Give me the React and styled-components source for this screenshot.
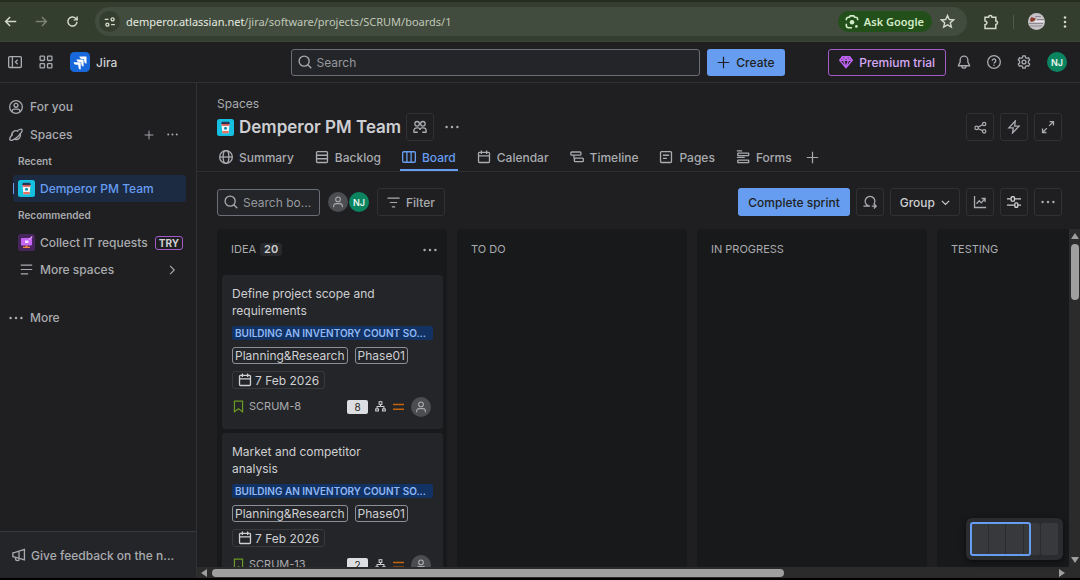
import React from 'react';
import styled, { createGlobalStyle, css } from 'styled-components';

const c = {
  surface: '#1f1f21',
  sunken: '#18191a',
  raised: '#242528',
  border: '#2e2f32',
  text: '#cecfd2',
  subtle: '#a9abaf',
  subtlest: '#96999e',
  blue: '#669df1',
  green: '#0b8560',
  purple: '#bf63f3',
};

const Global = createGlobalStyle`
  *, *::before, *::after { box-sizing: border-box; }
  body { margin: 0; background: #000; }
  button, input { font: inherit; color: inherit; }
  button { cursor: pointer; }
  ul { list-style: none; margin: 0; padding: 0; }
  a { color: inherit; text-decoration: none; }
`;

/* ---------- icons ---------- */

const Svg = styled.svg`
  width: ${(p) => p.$size || 14}px;
  height: ${(p) => p.$size || 14}px;
  flex: none;
  display: block;
  fill: none;
  stroke: currentColor;
  stroke-width: ${(p) => p.$weight || 1.5};
`;

const shapes = {
  back: <path d="M15 8H2M7.5 2.5 2 8l5.500 5.500" />,
  forward: <path d="M1 8h13M8.500 2.500 14 8l-5.500 5.500" />,
  reload: <><path d="M13.500 8.500A5.600 5.600 0 1 1 12 4.200l1.500 1.500" /><path d="M13.700 1.800v4.200H9.500" /></>,
  tune: <><path d="M1 4.500h5M9.500 11.500h5" /><circle cx="11.500" cy="4.500" r="2" /><circle cx="4.500" cy="11.500" r="2" /></>,
  lens: <><path d="M1.500 6V5A2.500 2.500 0 0 1 4 2.500h1L6 1h4l1 1.500h1A2.500 2.500 0 0 1 14.500 5v1M1.500 10v2A2.500 2.500 0 0 0 4 14.500h4" /><circle cx="8" cy="8.300" r="2.600" fill="currentColor" stroke="none" /><circle cx="13" cy="13" r="1.500" fill="currentColor" stroke="none" /></>,
  star: <path d="m8 1.600 1.900 4.300 4.700.4-3.600 3.100 1.100 4.600L8 11.600 3.900 14 5 9.400 1.400 6.300l4.700-.4z" />,
  puzzle: <path d="M2 3.200h3.600a1.700 1.700 0 0 1 3.400 0h3.800v3.900a1.700 1.700 0 0 1 0 3.400v3.900H2v-3.700c2.600-.3 2.600-3.500 0-3.800z" />,
  collapse: <><rect x=".75" y="1.750" width="14.500" height="12.500" rx="1.250" /><path d="M5 2v12M11 5.500 8.500 8l2.500 2.500" /></>,
  apps: <><rect x="1.250" y="1.250" width="5" height="5" rx=".8" /><rect x="9.750" y="1.250" width="5" height="5" rx=".8" /><rect x="1.250" y="9.750" width="5" height="5" rx=".8" /><rect x="9.750" y="9.750" width="5" height="5" rx=".8" /></>,
  search: <><circle cx="7" cy="7" r="5.750" /><path d="m11.200 11.200 4 4" /></>,
  plus: <path d="M8 1v14M1 8h14" />,
  gem: <path d="M3.800 2h8.400l3 4L8 14.500.8 6zM1 6h14M5.200 6 8 14l2.800-8M5.200 6 8 2l2.800 4M3.800 2l1.400 4M12.200 2l-1.400 4" />,
  bell: <><path d="M8 1.250A4.400 4.400 0 0 0 3.600 5.600v2.600L1.700 11.500v.75h12.600v-.75l-1.900-3.300V5.600A4.400 4.400 0 0 0 8 1.250z" /><path d="M5.500 12.500a2.500 2.500 0 0 0 5 0" /></>,
  help: <><circle cx="8" cy="8" r="7.250" /><path d="M6 6.600a2 2 0 1 1 3.200 1.600C8.400 8.700 8 9 8 9.800" /><circle cx="8" cy="11.700" r=".9" fill="currentColor" stroke="none" /></>,
  gear: <><path d="m6.700 1-.5 1.900-1.500.9-1.900-.6-1.300 2.300 1.400 1.400v2.200L1.500 10.500l1.300 2.300 1.900-.6 1.500.9.500 1.900h2.600l.5-1.900 1.500-.9 1.900.6 1.300-2.300-1.400-1.400V6.900l1.400-1.400-1.300-2.300-1.900.6-1.500-.9L9.300 1z" /><circle cx="8" cy="8" r="2.200" /></>,
  person: <><circle cx="8" cy="8" r="7.250" /><circle cx="8" cy="6" r="2.250" /><path d="M3.700 13.500v-.7A2.300 2.300 0 0 1 6 10.500h4a2.300 2.300 0 0 1 2.300 2.300v.7" /></>,
  planet: <><path d="M12.600 6.100A4.900 4.900 0 0 1 6.100 12.600M3.300 9.500A4.900 4.900 0 0 1 10.600 3.900" /><path d="M4 7.200C1.600 9.900.3 12.500 1.100 13.600c1.200 1.600 5.200-.4 8.800-3.700s6-7.100 4.800-8.300c-.7-.8-2.600-.1-4.700 1.300" /></>,
  dots: <g fill="currentColor" stroke="none"><circle cx="1.800" cy="8" r="1.400" /><circle cx="8" cy="8" r="1.400" /><circle cx="14.200" cy="8" r="1.400" /></g>,
  kebab: <g fill="currentColor" stroke="none"><circle cx="8" cy="2" r="1.700" /><circle cx="8" cy="8" r="1.700" /><circle cx="8" cy="14" r="1.700" /></g>,
  lines: <path d="M1 2.500h14M1 8h14M1 13.500h9" />,
  chevronRight: <path d="m5.500 2.500 5.500 5.500-5.500 5.500" />,
  chevronDown: <path d="m1.500 5 6.500 6.500L14.500 5" />,
  megaphone: <><path d="M1 5.500 3.500 5 14.200 1.500v12L3.500 10.500 1 10z" /><path d="M8 4v8M4 11v1.500a2.200 2.200 0 0 0 4.300.4" /></>,
  people: <><circle cx="4.700" cy="4.300" r="2.600" /><circle cx="11.300" cy="4.300" r="2.600" /><path d="M1 14.500v-2.200a3.200 3.200 0 0 1 3.200-3.200h1.300c1.500 0 2.500.9 2.500 2.400 0-1.500 1-2.400 2.500-2.400h1.300a3.200 3.200 0 0 1 3.200 3.200v2.200M1 14h4.500M10.500 14H15" /></>,
  globe: <><circle cx="8" cy="8" r="7.250" /><ellipse cx="8" cy="8" rx="3.300" ry="7.250" /><path d="M1 8h14" /></>,
  backlog: <><rect x="1.750" y="1.750" width="12.500" height="12.500" rx="1" /><path d="M2 6h12M2 10h12" /></>,
  board: <><rect x=".75" y="2" width="14.500" height="12" rx="1.250" /><path d="M5.600 2v12M10.400 2v12" /></>,
  calendar: <><rect x="1.750" y="2.750" width="12.500" height="11.500" rx="1" /><path d="M2 6.750h12M5 .5v4M11 .5v4" /></>,
  timeline: <><rect x="1" y="2.250" width="11.500" height="3.500" rx="1" /><path d="M4.500 6v2.500a1.500 1.500 0 0 0 1.500 1.500" /><rect x="5" y="9.250" width="10.250" height="4" rx="1" /></>,
  pages: <><rect x="1.750" y="1.750" width="12.500" height="12.500" rx="1" /><path d="M4.500 6h7M4.500 9.500h4.500" /></>,
  forms: <><path d="M1 1h6M1 8.500h9" /><rect x="2" y="3.500" width="12.500" height="3" rx=".5" /><rect x="2" y="11.500" width="12.500" height="3" rx=".5" /></>,
  share: <><circle cx="3.200" cy="8.500" r="2.100" /><circle cx="12.500" cy="3.700" r="2.100" /><circle cx="12.500" cy="12.700" r="2.100" /><path d="m5.200 7.500 5.300-2.800M5.200 9.500l5.300 2.300" /></>,
  bolt: <path d="M9.500 1.200 2.200 9h5l-.9 5.800L13.800 7H8.700z" />,
  expand: <path d="M9.800 1.750h4.450V6.200M14 2 9.300 6.700M1.750 9.800v4.450H6.200M2 14l4.700-4.700" />,
  sprint: <><path d="M.5 12.700H8A5.600 5.600 0 1 1 12.400 10.600" /><path d="M10 12.700h5M12.400 10l2.700 2.700-2.700 2.700" /></>,
  chart: <path d="M1.750 1v13.250H15M4 10l3.200-3.500L9.500 9l4-4.500M9.800 4h4v4" />,
  sliders: <><path d="M0 4.500h4.500M9 4.500h7M0 11.500h8.500M12.500 11.500H16" /><rect x="4.750" y="2" width="3.800" height="5" rx="1" /><rect x="9" y="9" width="3.300" height="5" rx="1" /></>,
  filter: <path d="M.5 2.500h15M3.500 8h9M6 13.500h4" />,
  bookmark: <path d="M3 1.250h10v13.250L8 10.700l-5 3.800z" />,
  tree: <g><rect x="6" y="1" width="4" height="4" /><path d="M8 5v3M3 11.500V8h10v3.500" /><rect x="1" y="11.500" width="4" height="3" /><rect x="11" y="11.500" width="4" height="3" /></g>,
  equal: <path d="M0 5h16M0 12h16" />,
  user: <><circle cx="8" cy="4.500" r="3.100" /><path d="M2.200 15v-1.700a3.200 3.200 0 0 1 3.200-3.200h5.200a3.200 3.200 0 0 1 3.200 3.200V15" /></>,
};

const Icon = ({ name, size, weight }) => (
  <Svg viewBox="0 0 16 16" $size={size} $weight={weight} aria-hidden="true">{shapes[name]}</Svg>
);

const Art = styled.svg`
  width: ${(p) => p.$size}px;
  height: ${(p) => p.$size}px;
  flex: none;
  display: block;
`;

const JiraLogo = () => (
  <Art $size={20} viewBox="0 0 20 20" aria-hidden="true">
    <rect width="20" height="20" rx="4.500" fill="#1868db" />
    <g fill="#fff">
      <path d="M9.300 4.500h7.200v7.200a3 3 0 0 1-2.400-3V7H12.300a3 3 0 0 1-3-2.500z" />
      <path d="M6.400 7.400h7.200v7.200a3 3 0 0 1-2.400-3V9.900H9.400a3 3 0 0 1-3-2.500z" />
      <path d="M3.500 10.300h7.200v7.200a3 3 0 0 1-2.400-3v-1.700H6.500a3 3 0 0 1-3-2.500z" />
    </g>
  </Art>
);

const CupLogo = () => (
  <Art $size={17} viewBox="0 0 17 17" aria-hidden="true">
    <rect width="17" height="17" rx="2.500" fill="#15bfdf" />
    <path d="M5 2.800h7l1 2.200H4z" fill="#253858" />
    <path d="M4.500 5h8l-.9 9.200H5.400z" fill="#f4f5f7" />
    <path d="M4.500 5h8l-.15 1.700h-7.700z" fill="#d9534f" />
    <path d="M5.200 12h6.600l-.2 2.200H5.400z" fill="#e5725f" />
    <circle cx="8.500" cy="9.300" r="1.500" fill="#158cb0" />
  </Art>
);

const ServiceLogo = () => (
  <Art $size={17} viewBox="0 0 17 17" aria-hidden="true">
    <rect width="17" height="17" rx="2.500" fill="#48245d" />
    <rect x="3" y="4" width="11" height="7.500" rx="1" fill="#c566f5" />
    <path d="M7 6.500h3.500V9H7z" fill="#f3dcff" />
    <path d="M11 5.500 14.300 2.500" stroke="#dfa5fb" strokeWidth="1.200" />
    <path d="M7.500 11.500h2v1.300h2.500v1.200H5v-1.200h2.500z" fill="#f0883e" />
  </Art>
);

const ProfilePhoto = () => (
  <Art $size={17} viewBox="0 0 17 17" aria-hidden="true">
    <circle cx="8.500" cy="8.500" r="8.500" fill="#c8c3c6" />
    <path d="M2 6.500 3.500 4 6 5l2 .5-2 2.500L3 9z" fill="#8c3a2a" />
    <path d="M7 3.500h6M9 6.500h7M1 10.500h14M2 13h12" stroke="#8d8a94" strokeWidth="1" />
    <path d="M7 8.500h9" stroke="#eeeaf0" strokeWidth="1.200" />
  </Art>
);

/* ---------- shared parts ---------- */

const Shell = styled.div`
  height: 100vh;
  display: flex;
  flex-direction: column;
  padding-bottom: 2px;
  font-family: Inter, 'Liberation Sans', sans-serif;
  font-size: 12px;
  line-height: 17px;
  color: ${c.subtle};
  background: #000;
`;

const PlainButton = styled.button`
  display: flex;
  align-items: center;
  justify-content: center;
  padding: 0;
  border: 0;
  background: none;
  color: ${(p) => p.$color || 'inherit'};
`;

const BoxButton = styled.button`
  display: flex;
  align-items: center;
  justify-content: center;
  gap: 6px;
  height: 28px;
  min-width: 28px;
  padding: 0 ${(p) => (p.$label ? 9 : 0)}px;
  border: 1px solid #303134;
  border-radius: 3px;
  background: none;
  color: ${(p) => (p.$bright ? c.text : c.subtle)};
  font-weight: 500;
  white-space: nowrap;
`;

const PrimaryButton = styled.button`
  display: flex;
  align-items: center;
  justify-content: center;
  gap: 6px;
  height: ${(p) => p.$height || 28}px;
  padding: 0 10px;
  border: 0;
  border-radius: 3px;
  background: ${c.blue};
  color: #1f1f21;
  font-weight: 500;
  white-space: nowrap;
`;

const Avatar = styled.span`
  display: flex;
  align-items: center;
  justify-content: center;
  flex: none;
  width: 20px;
  height: 20px;
  border-radius: 50%;
  background: ${(p) => (p.$empty ? '#4b4d51' : c.green)};
  color: ${(p) => (p.$empty ? '#a9abaf' : '#e8f5ef')};
  font-size: 9px;
  font-weight: 600;
`;

const Group = styled.div`
  display: flex;
  align-items: center;
  gap: ${(p) => p.$gap}px;
`;

/* ---------- browser bar ---------- */

const BrowserBar = styled.div`
  flex: none;
  display: flex;
  align-items: center;
  gap: 16px;
  height: 42px;
  padding: 0 9px 0 4px;
  border-top: 2px solid #252d20;
  border-bottom: 1px solid #3d453a;
  background: #343e2e;
  color: #d3dacb;
  font-family: 'Noto Sans', 'Open Sans', sans-serif;
  font-size: 11px;
`;

const Omnibox = styled.div`
  flex: 1;
  min-width: 0;
  display: flex;
  align-items: center;
  gap: 6px;
  height: 29px;
  padding: 0 12px 0 4px;
  border-radius: 15px;
  background: #424c3e;
`;

const SiteInfo = styled(PlainButton)`
  width: 21px;
  height: 21px;
  border-radius: 50%;
  background: #343e2e;
`;

const Address = styled.span`
  flex: 1;
  min-width: 0;
  overflow: hidden;
  text-overflow: ellipsis;
  white-space: nowrap;
  color: #c0c7b9;
  b { font-weight: 400; color: #e6ebe0; }
`;

const AskButton = styled(PlainButton)`
  gap: 5px;
  height: 21px;
  padding: 0 8px 0 7px;
  margin-right: 2px;
  border-radius: 11px;
  background: #234f1b;
  color: #d3ecc8;
  font-weight: 600;
`;

const BarDivider = styled.span`
  width: 1px;
  height: 14px;
  background: #505a4b;
`;

/* ---------- app header ---------- */

const Header = styled.header`
  flex: none;
  display: grid;
  grid-template-columns: 1fr minmax(0, 494px) 1fr;
  align-items: center;
  height: 41px;
  padding: 0 13px 0 8px;
  border-bottom: 1px solid #303134;
  background: ${c.surface};
`;

const Brand = styled.a`
  display: flex;
  align-items: center;
  gap: 6px;
  color: ${c.text};
  font-weight: 500;
`;

const SearchBar = styled.div`
  display: flex;
  gap: 7px;
`;

const Field = styled.label`
  display: flex;
  align-items: center;
  gap: 5px;
  flex: ${(p) => (p.$grow ? '1' : 'none')};
  width: ${(p) => (p.$grow ? 'auto' : '103px')};
  min-width: 0;
  height: 27px;
  padding: 0 0 0 6px;
  border: 1px solid #6b6e76;
  border-radius: 3px;
  background: #242528;
`;

const Input = styled.input`
  flex: 1;
  min-width: 0;
  width: 100%;
  padding: 0;
  border: 0;
  outline: 0;
  background: none;
  &::placeholder { color: ${c.subtlest}; opacity: 1; }
`;

const HeaderActions = styled(Group)`
  justify-content: flex-end;
`;

const PremiumButton = styled(PlainButton)`
  gap: 6px;
  height: 27px;
  padding: 0 10px;
  margin-right: -5px;
  border: 1px solid #a35bca;
  border-radius: 3px;
  color: #d7a8f5;
  font-weight: 500;
  white-space: nowrap;
  svg { color: ${c.purple}; }
`;

/* ---------- sidebar ---------- */

const Body = styled.div`
  flex: 1;
  min-height: 0;
  display: flex;
`;

const Sidebar = styled.nav`
  flex: none;
  width: 197px;
  display: flex;
  flex-direction: column;
  border-right: 1px solid #303134;
  background: ${c.surface};
`;

const SideList = styled.ul`
  flex: 1;
  padding: 10px 10px 0 9px;
`;

const SideItem = styled.li`
  display: flex;
  align-items: center;
  gap: 7px;
  height: 27px;
  margin-top: ${(p) => p.$space || 0}px;
  margin-left: ${(p) => (p.$nested ? 4 : 0)}px;
  padding-left: ${(p) => (p.$nested ? 5 : 0)}px;
  font-weight: 500;
  white-space: nowrap;
  ${(p) => p.$selected && css`
    border-radius: 3px;
    color: ${c.blue};
    background: linear-gradient(${c.blue}, ${c.blue}) 0 50% / 1px 11px no-repeat #1c2b42;
  `}
`;

const SideLink = styled.a`
  flex: 1;
  min-width: 0;
  display: flex;
  align-items: center;
  gap: ${(p) => (p.$nested ? 5 : 7)}px;
`;

const IconSlot = styled.span`
  flex: none;
  width: 17px;
  display: flex;
  justify-content: center;
`;

const SideHeading = styled.li`
  display: flex;
  align-items: center;
  height: 27px;
  padding-left: 9px;
  font-size: 10px;
  font-weight: 600;
`;

const TryBadge = styled.span`
  margin-right: 3px;
  padding: 0 3px;
  border: 1px solid #a35bca;
  border-radius: 3px;
  color: ${c.text};
  font-size: 10px;
  font-weight: 700;
  line-height: 12px;
`;

const SideActions = styled(Group)`
  padding-right: 8px;
`;

const Feedback = styled.a`
  flex: none;
  display: flex;
  align-items: center;
  gap: 5px;
  height: 47px;
  padding: 0 12px;
  border-top: 1px solid #38393c;
  background: #242528;
  font-weight: 500;
  white-space: nowrap;
`;

/* ---------- main ---------- */

const Main = styled.main`
  flex: 1;
  min-width: 0;
  display: flex;
  flex-direction: column;
  background: ${c.surface};
`;

const SpaceHeader = styled.header`
  padding: 12px 18px 0 20px;
  border-bottom: 1px solid ${c.border};
`;

const Crumb = styled.a`
  display: block;
  padding-bottom: 1px;
`;

const TitleRow = styled.div`
  display: flex;
  align-items: center;
  gap: 5px;
  height: 28px;
`;

const Title = styled.h1`
  margin: 0;
  color: ${c.text};
  font-size: 17px;
  line-height: 22px;
  font-weight: 600;
  white-space: nowrap;
`;

const Spacer = styled.span`
  flex: 1;
`;

const TabBar = styled.div`
  display: flex;
  gap: 12px;
  height: 30px;
  padding-top: 2px;
`;

const Tabs = styled.nav`
  display: flex;
  gap: 17px;
`;

const Tab = styled.a`
  display: flex;
  align-items: center;
  gap: 6px;
  padding: 2px 2px 0;
  border-bottom: 2px solid ${(p) => (p.$active ? c.blue : 'transparent')};
  color: ${(p) => (p.$active ? c.blue : c.subtle)};
  font-weight: 500;
  white-space: nowrap;
`;

const Toolbar = styled.div`
  display: flex;
  align-items: center;
  gap: 8px;
  padding: 16px 18px 13px 20px;
`;

/* ---------- board ---------- */

const BoardArea = styled.div`
  position: relative;
  flex: 1;
  min-height: 0;
  display: grid;
  grid-template-columns: minmax(0, 1fr) 11px;
  grid-template-rows: minmax(0, 1fr) 11px;
`;

const Columns = styled.div`
  display: flex;
  gap: 10px;
  padding-left: 20px;
  overflow: hidden;
`;

const Column = styled.section`
  flex: none;
  width: 230px;
  padding: 0 4px 0 5px;
  border-radius: 5px 5px 0 0;
  background: ${c.sunken};
`;

const ColumnHead = styled.header`
  display: flex;
  align-items: center;
  gap: 4px;
  height: 46px;
  padding: 0 6px 5px 9px;
`;

const ColumnName = styled.h2`
  margin: 0;
  font-size: 11px;
  font-weight: 400;
`;

const Count = styled.span`
  padding: 0 4px;
  border-radius: 3px;
  background: #28292c;
  color: ${c.text};
  font-size: 11px;
  font-weight: 600;
  line-height: 13px;
`;

const Card = styled.article`
  display: flex;
  flex-direction: column;
  align-items: flex-start;
  gap: 7px;
  margin-bottom: 4px;
  padding: 10px 10px 12px;
  border-radius: 3px;
  background: ${c.raised};
  color: ${c.text};
`;

const CardTitle = styled.h3`
  margin: 0;
  padding-right: 36px;
  font-size: 12px;
  font-weight: 400;
`;

const Epic = styled.span`
  width: 100%;
  padding: 0 3px;
  border-radius: 2px;
  background: #123263;
  color: #8fb8f6;
  font-size: 10px;
  font-weight: 600;
  line-height: 14px;
  white-space: nowrap;
`;

const Label = styled.span`
  padding: 0 2px;
  border: 1px solid #8c8f97;
  border-radius: 3px;
  line-height: 15px;
`;

const DueDate = styled.time`
  display: flex;
  align-items: center;
  gap: 3px;
  height: 18px;
  padding: 0 5px;
  border: 1px solid #38393c;
  border-radius: 3px;
`;

const CardFoot = styled.footer`
  align-self: stretch;
  display: flex;
  align-items: center;
  gap: 7px;
  height: 21px;
  padding-right: 2px;
`;

const IssueKey = styled.a`
  display: flex;
  align-items: center;
  gap: 4px;
  flex: 1;
  color: ${c.subtle};
  font-size: 11px;
  svg { color: #6a9a23; }
`;

const Estimate = styled.span`
  width: 21px;
  border-radius: 2px;
  background: #dddee1;
  color: #1f1f21;
  font-size: 10px;
  line-height: 14px;
  text-align: center;
`;

const Priority = styled.span`
  color: #c2650c;
`;

/* ---------- scroll bars and minimap ---------- */

const Track = styled.div`
  display: flex;
  align-items: center;
  justify-content: space-between;
  flex-direction: ${(p) => (p.$vertical ? 'column' : 'row')};
  gap: 4px;
  padding: ${(p) => (p.$vertical ? '3px 0' : '0 3px')};
  background: #2b2b2c;
  color: #9f9f9f;
`;

const Thumb = styled.span`
  border-radius: 4px;
  background: #9f9f9f;
  ${(p) => (p.$vertical ? 'width: 8px; height: 17%;' : 'height: 8px; width: 66%;')}
`;

const Corner = styled.div`
  background: #2b2b2c;
`;

const arrows = {
  up: 'M4 1 8 7H0z',
  down: 'M4 7 0 1h8z',
  left: 'M1 4 7 0v8z',
  right: 'M7 4 1 8V0z',
};

const Arrow = ({ dir }) => (
  <Art $size={8} viewBox="0 0 8 8" fill="currentColor" aria-hidden="true"><path d={arrows[dir]} /></Art>
);

const Minimap = styled.div`
  position: absolute;
  right: 17px;
  bottom: 18px;
  display: flex;
  gap: 1px;
  width: 97px;
  height: 42px;
  padding: 5px;
  border-radius: 6px;
  background: #2b2c2f;
  box-shadow: 0 2px 6px #0008;
`;

const MiniColumn = styled.span`
  flex: 1;
  border-radius: 2px;
  background: #38393d;
`;

const MiniView = styled.span`
  position: absolute;
  left: 4px;
  top: 4px;
  width: 61px;
  height: 34px;
  border: 2px solid ${c.blue};
  border-radius: 3px;
`;

/* ---------- data ---------- */

const tabs = [
  ['globe', 'Summary'],
  ['backlog', 'Backlog'],
  ['board', 'Board'],
  ['calendar', 'Calendar'],
  ['timeline', 'Timeline'],
  ['pages', 'Pages'],
  ['forms', 'Forms'],
];

const issues = [
  { id: 'SCRUM-8', title: 'Define project scope and requirements', points: 8 },
  { id: 'SCRUM-13', title: 'Market and competitor analysis', points: 2 },
];

const emptyColumns = ['TO DO', 'IN PROGRESS', 'TESTING'];

const Issue = ({ issue }) => (
  <Card>
    <CardTitle>{issue.title}</CardTitle>
    <Epic>BUILDING AN INVENTORY COUNT SO...</Epic>
    <Group $gap={7}>
      <Label>Planning&amp;Research</Label>
      <Label>Phase01</Label>
    </Group>
    <DueDate dateTime="2026-02-07"><Icon name="calendar" />7 Feb 2026</DueDate>
    <CardFoot>
      <IssueKey href="#issue"><Icon name="bookmark" size={13} />{issue.id}</IssueKey>
      <Estimate>{issue.points}</Estimate>
      <Icon name="tree" size={11} weight={1.5} />
      <Priority><Icon name="equal" size={11} weight={2} /></Priority>
      <Avatar $empty><Icon name="user" size={12} /></Avatar>
    </CardFoot>
  </Card>
);

export default function App() {
  return (
    <Shell>
      <Global />
      <BrowserBar>
        <Group $gap={18}>
          <PlainButton aria-label="Back"><Icon name="back" size={13} weight={1.8} /></PlainButton>
          <PlainButton aria-label="Forward" $color="#7b8474"><Icon name="forward" size={13} weight={1.8} /></PlainButton>
          <PlainButton aria-label="Reload"><Icon name="reload" size={13} weight={1.8} /></PlainButton>
        </Group>
        <Omnibox>
          <SiteInfo aria-label="Site information"><Icon name="tune" size={12} weight={1.8} /></SiteInfo>
          <Address><b>demperor.atlassian.net</b>/jira/software/projects/SCRUM/boards/1</Address>
          <AskButton><Icon name="lens" weight={1.8} />Ask Google</AskButton>
          <PlainButton aria-label="Bookmark"><Icon name="star" size={15} /></PlainButton>
        </Omnibox>
        <Group $gap={14}>
          <PlainButton aria-label="Extensions"><Icon name="puzzle" size={16} /></PlainButton>
          <BarDivider />
          <PlainButton aria-label="Profile"><ProfilePhoto /></PlainButton>
          <PlainButton aria-label="Browser menu"><Icon name="kebab" size={12} /></PlainButton>
        </Group>
      </BrowserBar>

      <Header>
        <Group $gap={17}>
          <PlainButton aria-label="Collapse sidebar"><Icon name="collapse" /></PlainButton>
          <PlainButton aria-label="Switch apps"><Icon name="apps" /></PlainButton>
          <Brand href="#jira"><JiraLogo />Jira</Brand>
        </Group>
        <SearchBar>
          <Field $grow>
            <Icon name="search" />
            <Input type="text" placeholder="Search" aria-label="Search" />
          </Field>
          <PrimaryButton $height={27}><Icon name="plus" size={13} />Create</PrimaryButton>
        </SearchBar>
        <HeaderActions $gap={16}>
          <PremiumButton><Icon name="gem" />Premium trial</PremiumButton>
          <PlainButton aria-label="Notifications"><Icon name="bell" /></PlainButton>
          <PlainButton aria-label="Help"><Icon name="help" /></PlainButton>
          <PlainButton aria-label="Settings"><Icon name="gear" /></PlainButton>
          <PlainButton aria-label="Account"><Avatar>NJ</Avatar></PlainButton>
        </HeaderActions>
      </Header>

      <Body>
        <Sidebar>
          <SideList>
            <SideItem><SideLink href="#you"><Icon name="person" />For you</SideLink></SideItem>
            <SideItem $space={1}>
              <SideLink href="#spaces"><Icon name="planet" />Spaces</SideLink>
              <SideActions $gap={13}>
                <PlainButton aria-label="Create space"><Icon name="plus" size={10} /></PlainButton>
                <PlainButton aria-label="Space options"><Icon name="dots" size={11} /></PlainButton>
              </SideActions>
            </SideItem>
            <SideHeading>Recent</SideHeading>
            <SideItem $nested $selected><SideLink $nested href="#demperor"><CupLogo />Demperor PM Team</SideLink></SideItem>
            <SideHeading>Recommended</SideHeading>
            <SideItem $nested>
              <SideLink $nested href="#collect"><ServiceLogo />Collect IT requests</SideLink>
              <TryBadge>TRY</TryBadge>
            </SideItem>
            <SideItem $nested>
              <SideLink $nested href="#all"><IconSlot><Icon name="lines" size={13} /></IconSlot>More spaces</SideLink>
              <SideActions><Icon name="chevronRight" size={12} /></SideActions>
            </SideItem>
            <SideItem $space={21}><SideLink href="#more"><Icon name="dots" />More</SideLink></SideItem>
          </SideList>
          <Feedback href="#feedback"><Icon name="megaphone" />Give feedback on the n...</Feedback>
        </Sidebar>

        <Main>
          <SpaceHeader>
            <Crumb href="#spaces">Spaces</Crumb>
            <TitleRow>
              <CupLogo />
              <Title>Demperor PM Team</Title>
              <Group $gap={11}>
                <BoxButton aria-label="Team"><Icon name="people" /></BoxButton>
                <PlainButton aria-label="Space actions"><Icon name="dots" /></PlainButton>
              </Group>
              <Spacer />
              <Group $gap={6}>
                <BoxButton aria-label="Share"><Icon name="share" size={13} /></BoxButton>
                <BoxButton aria-label="Automation"><Icon name="bolt" /></BoxButton>
                <BoxButton aria-label="Full screen"><Icon name="expand" /></BoxButton>
              </Group>
            </TitleRow>
            <TabBar>
              <Tabs>
                {tabs.map(([icon, label]) => (
                  <Tab key={label} href={`#${label}`} $active={label === 'Board'}><Icon name={icon} />{label}</Tab>
                ))}
              </Tabs>
              <PlainButton aria-label="Add tab"><Icon name="plus" size={13} /></PlainButton>
            </TabBar>
          </SpaceHeader>

          <Toolbar>
            <Field>
              <Icon name="search" />
              <Input type="text" placeholder="Search bo..." aria-label="Search board" />
            </Field>
            <Group $gap={1}>
              <Avatar $empty><Icon name="user" size={12} /></Avatar>
              <Avatar>NJ</Avatar>
            </Group>
            <BoxButton $label><Icon name="filter" size={13} />Filter</BoxButton>
            <Spacer />
            <Group $gap={6}>
              <PrimaryButton>Complete sprint</PrimaryButton>
              <BoxButton aria-label="Sprint details"><Icon name="sprint" /></BoxButton>
              <BoxButton $label $bright>Group<Icon name="chevronDown" size={9} weight={2} /></BoxButton>
              <BoxButton aria-label="Insights"><Icon name="chart" /></BoxButton>
              <BoxButton aria-label="View settings" $bright><Icon name="sliders" /></BoxButton>
              <BoxButton aria-label="Board actions"><Icon name="dots" /></BoxButton>
            </Group>
          </Toolbar>

          <BoardArea>
            <Columns>
              <Column>
                <ColumnHead>
                  <ColumnName>IDEA</ColumnName>
                  <Count>20</Count>
                  <Spacer />
                  <PlainButton aria-label="Column actions"><Icon name="dots" /></PlainButton>
                </ColumnHead>
                {issues.map((issue) => <Issue key={issue.id} issue={issue} />)}
              </Column>
              {emptyColumns.map((name) => (
                <Column key={name}>
                  <ColumnHead><ColumnName>{name}</ColumnName></ColumnHead>
                </Column>
              ))}
            </Columns>
            <Track $vertical aria-hidden="true">
              <Arrow dir="up" />
              <Thumb $vertical />
              <Spacer />
              <Arrow dir="down" />
            </Track>
            <Track aria-hidden="true">
              <Arrow dir="left" />
              <Thumb />
              <Spacer />
              <Arrow dir="right" />
            </Track>
            <Corner />
            <Minimap aria-hidden="true">
              <MiniColumn /><MiniColumn /><MiniColumn /><MiniColumn /><MiniColumn />
              <MiniView />
            </Minimap>
          </BoardArea>
        </Main>
      </Body>
    </Shell>
  );
}
